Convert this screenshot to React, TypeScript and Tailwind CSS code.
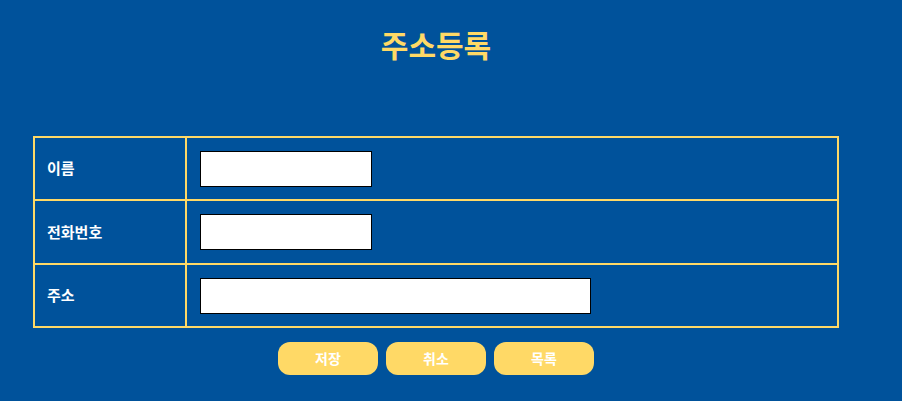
import React from "react";

const rows = [
  { label: "이름", width: "w-[172px]", h: "h-[63px]" },
  { label: "전화번호", width: "w-[172px]", h: "h-[64px]" },
  { label: "주소", width: "w-[391px]", h: "h-[63px]" },
];

export default function App() {
  return (
    <div className="min-h-[401px] w-full bg-[#00529b] font-['Noto_Sans_CJK_KR','Noto_Sans',sans-serif] pt-[18px]">
      <h1 className="ml-[33px] w-[806px] text-center text-[30px] font-bold leading-[52px] text-[#ffd966]">
        주소등록
      </h1>

      <table className="ml-[33px] mt-[66px] w-[806px] border-collapse border-2 border-[#ffd966]">
        <tbody>
          {rows.map((r) => (
            <tr key={r.label} className={r.h}>
              <td className="w-[152px] border-2 border-[#ffd966] pl-[12px] text-[15px] font-bold text-white">
                {r.label}
              </td>
              <td className="border-2 border-[#ffd966] pl-[13px]">
                <input
                  type="text"
                  className={`${r.width} block h-[36px] border border-black bg-white`}
                />
              </td>
            </tr>
          ))}
        </tbody>
      </table>

      <div className="ml-[33px] mt-[14px] flex w-[806px] justify-center gap-[8px]">
        {["저장", "취소", "목록"].map((b) => (
          <button
            key={b}
            className="h-[33px] w-[100px] rounded-xl bg-[#ffd966] text-[14px] font-bold text-white"
          >
            {b}
          </button>
        ))}
      </div>
    </div>
  );
}
